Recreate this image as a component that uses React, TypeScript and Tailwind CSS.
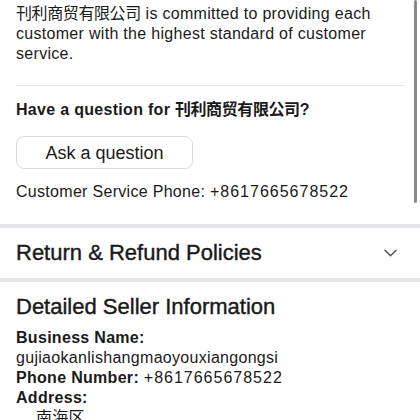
const FONT = "font-['Liberation_Sans','Noto_Sans_CJK_JP',sans-serif]";
const HEAVY = "[-webkit-text-stroke:0.4px_#1a1a1a]";
const SELLER = "刊利商贸有限公司";
const PHONE = "+8617665678522";

function Chevron() {
  return (
    <svg viewBox="0 0 14 8" className="w-[13px] h-[8px]" fill="none">
      <path d="M1 1 L7 7 L13 1" stroke="#555" strokeWidth="1.6" strokeLinecap="round" strokeLinejoin="round" />
    </svg>
  );
}

export default function App() {
  return (
    <div className={`relative w-[420px] h-[420px] overflow-hidden bg-white text-[#1a1a1a] tracking-[0.3px] ${FONT}`}>
      {/* Seller blurb */}
      <div className="px-4">
        <p className="text-[16px] leading-[20px] pt-[4px]">
          <span className="tracking-[-0.4px]">{SELLER}</span> is committed to providing each customer with the highest
          standard of customer service.
        </p>
        <div className="mt-[21px] border-t border-[#e6e6e6]" />
        <h3 className="mt-[14px] text-[16px] leading-[20px] font-bold">
          Have a question for <span className="tracking-[-0.4px]">{SELLER}</span>?
        </h3>
        <button className="mt-[16px] w-[177px] h-[33px] rounded-[8px] border border-[#dcdcdc] bg-white text-[18px] leading-[20px] tracking-normal">
          Ask a question
        </button>
        <p className="mt-[13px] text-[16px] leading-[20px]">
          Customer Service Phone: <span className="tracking-[1px]">{PHONE}</span>
        </p>
      </div>

      {/* Return policies */}
      <div className="mt-[22px] h-[4px] bg-[#e5e5ea]" />
      <div className="h-[50px] px-4 flex items-center justify-between">
        <span className={`text-[22px] leading-[26px] tracking-normal ${HEAVY}`}>Return &amp; Refund Policies</span>
        <span className="mr-[7px]">
          <Chevron />
        </span>
      </div>
      <div className="h-[4px] bg-[#e5e5ea]" />

      {/* Seller details */}
      <div className="px-4 pt-[12px]">
        <h2 className={`text-[22px] leading-[26px] tracking-normal ${HEAVY}`}>Detailed Seller Information</h2>
        <div className="mt-[8px] text-[16px] leading-[20px]">
          <div className="font-bold">Business Name:</div>
          <div>gujiaokanlishangmaoyouxiangongsi</div>
          <div>
            <span className="font-bold">Phone Number:</span> <span className="tracking-[1px]">{PHONE}</span>
          </div>
          <div className="font-bold">Address:</div>
          <div className="pl-[20px]">南海区</div>
        </div>
      </div>

      {/* Overlay scrollbar */}
      <div className="absolute right-[3px] top-0 w-[3px] h-[203px] rounded-full bg-[#8a8a8a]" />
    </div>
  );
}
